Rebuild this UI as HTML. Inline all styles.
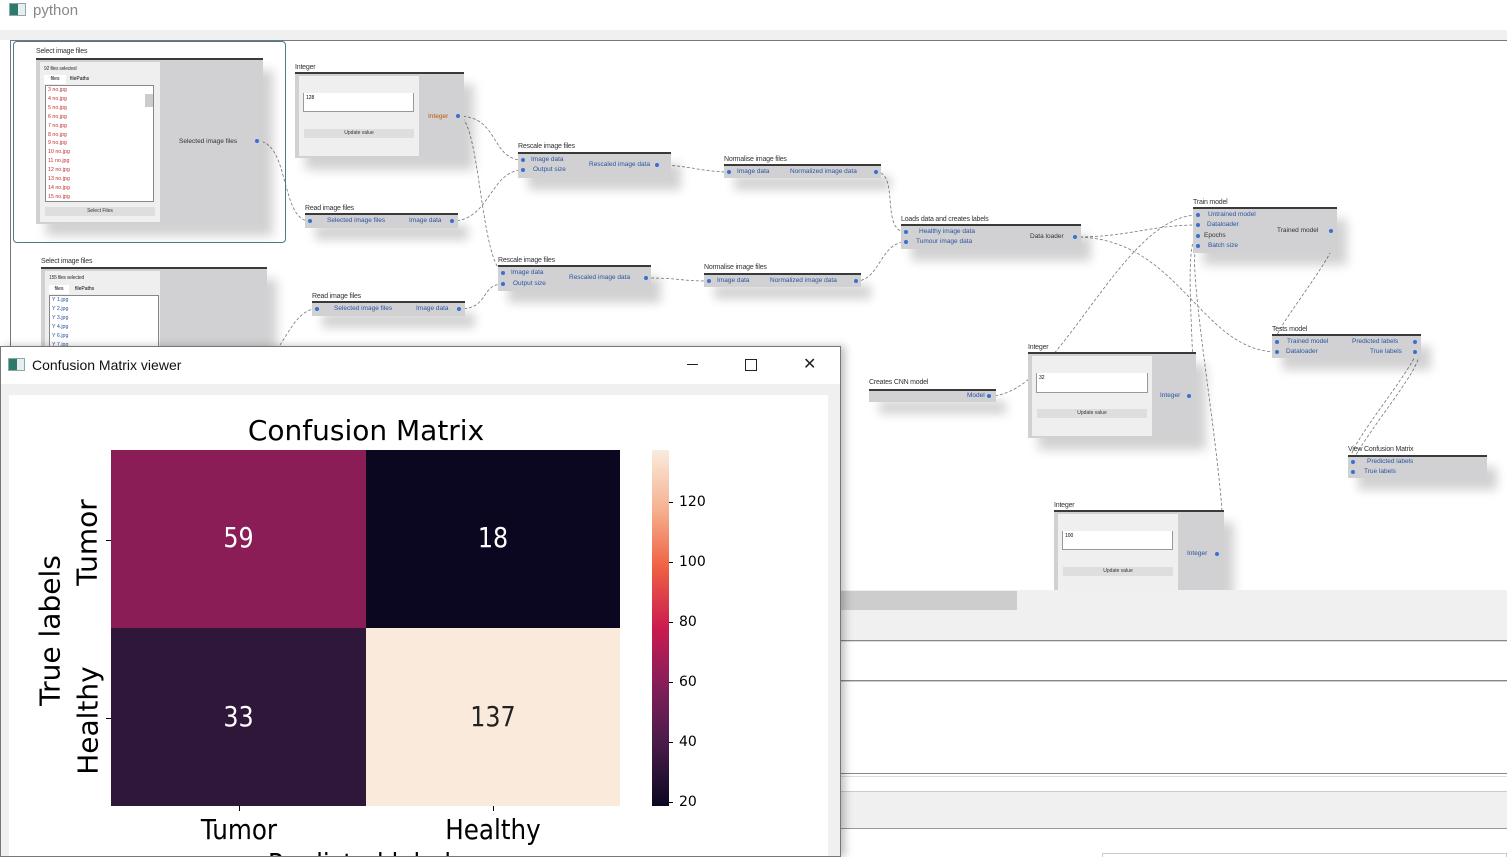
<!DOCTYPE html>
<html style="width:1507px;height:857px;overflow:hidden"><head><meta charset="utf-8"><style>
*{margin:0;padding:0;box-sizing:border-box}
body{width:1507px;height:857px;overflow:hidden;background:#fff;font-family:"Liberation Sans",sans-serif;position:relative}
.a{position:absolute}
.t{position:absolute;font-size:7px;color:#333;white-space:nowrap;letter-spacing:-0.2px}
.n{position:absolute;background:#d1d1d3;border-top:2px solid #3a3a3a;box-shadow:10px 12px 10px rgba(0,0,0,0.18)}
.r{position:absolute;font-size:6.5px;color:#2a55a0;white-space:nowrap}
.d{position:absolute;width:4px;height:4px;border-radius:2px;background:#3b6fd1}
.p{position:absolute;background:#efefef}
.in{position:absolute;background:#fff;border:1px solid #999;border-top:none;font-size:5px;padding:2px}
.b{position:absolute;background:#dedede;font-size:5px;text-align:center;line-height:9px;color:#333}
</style></head><body>
<div class="a" style="left:0;top:0;width:1507px;height:30px;background:#fff"></div>
<div class="a" style="left:9px;top:3px;width:17px;height:13px;border:1px solid #8aa;background:linear-gradient(90deg,#2d7a6a 0 55%,#e8eef0 55%)"></div>
<div class="a" style="left:33px;top:2px;font-size:15px;color:#888">python</div>
<div class="a" style="left:0;top:30px;width:1507px;height:10px;background:#f0f0f0"></div>
<div class="a" style="left:10px;top:40px;width:1497px;height:550px;border-top:1px solid #777;border-left:1px solid #777;background:#fff"></div>

<svg class="a" style="left:0;top:0" width="1507" height="590" fill="none" stroke="#777" stroke-width="0.8" stroke-dasharray="3,2">
<path d="M257 141 C290 141,280 221,310 221"/>
<path d="M458 116 C500 116,490 160,523 160"/>
<path d="M458 116 C480 116,480 260,503 273"/>
<path d="M452 221 C490 221,490 170,523 170"/>
<path d="M459 309 C490 309,480 284,503 284"/>
<path d="M280 345 C290 330,300 309,316 309"/>
<path d="M657 165 C690 165,700 172,730 172"/>
<path d="M646 278 C680 278,680 281,709 281"/>
<path d="M876 172 C900 172,880 232,906 232"/>
<path d="M856 281 C880 281,880 242,906 242"/>
<path d="M1075 237 C1130 237,1150 225,1198 225"/>
<path d="M1075 237 C1180 237,1200 352,1278 352"/>
<path d="M990 396 C1060 396,1120 215,1198 215"/>
<path d="M1190 396 C1200 396,1180 236,1198 236"/>
<path d="M1218 554 C1240 554,1180 246,1198 246"/>
<path d="M1331 231 C1360 231,1260 342,1278 342"/>
<path d="M1415 342 C1440 342,1330 462,1354 462"/>
<path d="M1415 352 C1440 352,1330 472,1354 472"/>
</svg>

<div class="a" style="left:13px;top:41px;width:273px;height:202px;border:1.5px solid #4a7a90;border-radius:4px"></div>
<div class="t" style="left:36px;top:48px">Select image files</div>
<div class="n" style="left:36px;top:58px;width:227px;height:166px"></div>
<div class="p" style="left:40px;top:62px;width:120px;height:160px"></div>
<div class="t" style="left:44px;top:66px;font-size:5px">92 files selected</div>
<div class="a" style="left:44px;top:75px;width:22px;height:9px;background:#fff;font-size:5px;text-align:center;line-height:9px">files</div>
<div class="a" style="left:70px;top:76px;font-size:5px">filePaths</div>
<div class="a" style="left:45px;top:85px;width:109px;height:117px;background:#fff;border:1px solid #888;font-size:5.3px;color:#c03030;line-height:8.9px;padding-left:2px">3 no.jpg<br>4 no.jpg<br>5 no.jpg<br>6 no.jpg<br>7 no.jpg<br>8 no.jpg<br>9 no.jpg<br>10 no.jpg<br>11 no.jpg<br>12 no.jpg<br>13 no.jpg<br>14 no.jpg<br>15 no.jpg</div>
<div class="a" style="left:145px;top:94px;width:8px;height:13px;background:#ccc"></div>
<div class="b" style="left:45px;top:207px;width:110px;height:9px">Select Files</div>
<div class="r" style="left:179px;top:138px;color:#333">Selected image files</div>
<div class="d" style="left:255px;top:139px"></div>

<div class="t" style="left:295px;top:64px">Integer</div>
<div class="n" style="left:295px;top:72px;width:169px;height:86px"></div>
<div class="p" style="left:299px;top:76px;width:120px;height:80px"></div>
<div class="in" style="left:303px;top:93px;width:111px;height:19px">128</div>
<div class="b" style="left:304px;top:129px;width:110px;height:9px">Update value</div>
<div class="r" style="left:428px;top:113px;color:#b85a00">Integer</div>
<div class="d" style="left:456px;top:114px"></div>

<div class="t" style="left:305px;top:205px">Read image files</div>
<div class="n" style="left:305px;top:213px;width:153px;height:15px"></div>
<div class="d" style="left:308px;top:219px"></div><div class="r" style="left:327px;top:217px">Selected image files</div>
<div class="r" style="left:409px;top:217px">Image data</div><div class="d" style="left:450px;top:219px"></div>

<div class="t" style="left:518px;top:143px">Rescale image files</div>
<div class="n" style="left:518px;top:152px;width:153px;height:26px"></div>
<div class="d" style="left:521px;top:158px"></div><div class="r" style="left:531px;top:156px">Image data</div>
<div class="d" style="left:521px;top:168px"></div><div class="r" style="left:533px;top:166px">Output size</div>
<div class="r" style="left:589px;top:161px">Rescaled image data</div><div class="d" style="left:655px;top:163px"></div>

<div class="t" style="left:724px;top:156px">Normalise image files</div>
<div class="n" style="left:724px;top:164px;width:157px;height:14px"></div>
<div class="d" style="left:727px;top:170px"></div><div class="r" style="left:737px;top:168px">Image data</div>
<div class="r" style="left:790px;top:168px">Normalized image data</div><div class="d" style="left:874px;top:170px"></div>

<div class="t" style="left:41px;top:258px">Select image files</div>
<div class="n" style="left:41px;top:267px;width:226px;height:90px"></div>
<div class="p" style="left:45px;top:271px;width:115px;height:86px"></div>
<div class="t" style="left:49px;top:275px;font-size:5px">155 files selected</div>
<div class="a" style="left:49px;top:285px;width:20px;height:9px;background:#fff;font-size:5px;text-align:center;line-height:9px">files</div>
<div class="a" style="left:75px;top:286px;font-size:5px">filePaths</div>
<div class="a" style="left:49px;top:295px;width:110px;height:60px;background:#fff;border:1px solid #888;font-size:5.3px;color:#2a55a0;line-height:8.9px;padding-left:2px">Y 1.jpg<br>Y 2.jpg<br>Y 3.jpg<br>Y 4.jpg<br>Y 6.jpg<br>Y 7.jpg</div>

<div class="t" style="left:312px;top:293px">Read image files</div>
<div class="n" style="left:312px;top:301px;width:153px;height:15px"></div>
<div class="d" style="left:315px;top:307px"></div><div class="r" style="left:334px;top:305px">Selected image files</div>
<div class="r" style="left:416px;top:305px">Image data</div><div class="d" style="left:457px;top:307px"></div>

<div class="t" style="left:498px;top:257px">Rescale image files</div>
<div class="n" style="left:498px;top:265px;width:153px;height:26px"></div>
<div class="d" style="left:501px;top:271px"></div><div class="r" style="left:511px;top:269px">Image data</div>
<div class="d" style="left:501px;top:282px"></div><div class="r" style="left:513px;top:280px">Output size</div>
<div class="r" style="left:569px;top:274px">Rescaled image data</div><div class="d" style="left:644px;top:276px"></div>

<div class="t" style="left:704px;top:264px">Normalise image files</div>
<div class="n" style="left:704px;top:273px;width:157px;height:14px"></div>
<div class="d" style="left:707px;top:279px"></div><div class="r" style="left:717px;top:277px">Image data</div>
<div class="r" style="left:770px;top:277px">Normalized image data</div><div class="d" style="left:854px;top:279px"></div>

<div class="t" style="left:901px;top:216px">Loads data and creates labels</div>
<div class="n" style="left:901px;top:224px;width:180px;height:25px"></div>
<div class="d" style="left:904px;top:230px"></div><div class="r" style="left:919px;top:228px">Healthy image data</div>
<div class="d" style="left:904px;top:240px"></div><div class="r" style="left:916px;top:238px">Tumour image data</div>
<div class="r" style="left:1030px;top:233px;color:#333">Data loader</div><div class="d" style="left:1073px;top:235px"></div>

<div class="t" style="left:1193px;top:199px">Train model</div>
<div class="n" style="left:1193px;top:207px;width:144px;height:46px"></div>
<div class="d" style="left:1196px;top:213px"></div><div class="r" style="left:1208px;top:211px">Untrained model</div>
<div class="d" style="left:1196px;top:223px"></div><div class="r" style="left:1207px;top:221px">Dataloader</div>
<div class="d" style="left:1196px;top:234px"></div><div class="r" style="left:1204px;top:232px;color:#333">Epochs</div>
<div class="d" style="left:1196px;top:244px"></div><div class="r" style="left:1208px;top:242px">Batch size</div>
<div class="r" style="left:1277px;top:227px;color:#333">Trained model</div><div class="d" style="left:1329px;top:229px"></div>

<div class="t" style="left:1272px;top:326px">Tests model</div>
<div class="n" style="left:1272px;top:334px;width:149px;height:24px"></div>
<div class="d" style="left:1275px;top:340px"></div><div class="r" style="left:1287px;top:338px">Trained model</div>
<div class="d" style="left:1275px;top:350px"></div><div class="r" style="left:1286px;top:348px">Dataloader</div>
<div class="r" style="left:1352px;top:338px">Predicted labels</div><div class="d" style="left:1413px;top:340px"></div>
<div class="r" style="left:1370px;top:348px">True labels</div><div class="d" style="left:1413px;top:350px"></div>

<div class="t" style="left:1348px;top:446px">View Confusion Matrix</div>
<div class="n" style="left:1348px;top:455px;width:139px;height:23px"></div>
<div class="d" style="left:1351px;top:460px"></div><div class="r" style="left:1367px;top:458px">Predicted labels</div>
<div class="d" style="left:1351px;top:470px"></div><div class="r" style="left:1364px;top:468px">True labels</div>

<div class="t" style="left:869px;top:379px">Creates CNN model</div>
<div class="n" style="left:869px;top:389px;width:127px;height:13px"></div>
<div class="r" style="left:967px;top:392px">Model</div><div class="d" style="left:987px;top:394px"></div>

<div class="t" style="left:1028px;top:344px">Integer</div>
<div class="n" style="left:1028px;top:352px;width:168px;height:86px"></div>
<div class="p" style="left:1032px;top:356px;width:120px;height:80px"></div>
<div class="in" style="left:1036px;top:373px;width:112px;height:20px">32</div>
<div class="b" style="left:1037px;top:409px;width:110px;height:9px">Update value</div>
<div class="r" style="left:1160px;top:392px">Integer</div><div class="d" style="left:1187px;top:394px"></div>

<div class="t" style="left:1054px;top:502px">Integer</div>
<div class="n" style="left:1054px;top:510px;width:170px;height:80px"></div>
<div class="p" style="left:1058px;top:514px;width:120px;height:76px"></div>
<div class="in" style="left:1062px;top:531px;width:111px;height:19px">100</div>
<div class="b" style="left:1063px;top:567px;width:110px;height:9px">Update value</div>
<div class="r" style="left:1187px;top:550px">Integer</div><div class="d" style="left:1215px;top:552px"></div>

<div class="a" style="left:840px;top:590px;width:667px;height:267px;background:#fff"></div>
<div class="a" style="left:840px;top:590px;width:667px;height:51px;background:#f0f0f0;border-bottom:1px solid #888"></div>
<div class="a" style="left:840px;top:591px;width:177px;height:19px;background:#cdcdcd"></div>
<div class="a" style="left:840px;top:641px;width:667px;height:41px;border-bottom:1px solid #ccc;border-top:1px solid #ddd"></div>
<div class="a" style="left:840px;top:680px;width:667px;height:1px;background:#888"></div>
<div class="a" style="left:840px;top:773px;width:667px;height:1px;background:#888"></div>
<div class="a" style="left:840px;top:776px;width:667px;height:1px;background:#ddd"></div>
<div class="a" style="left:840px;top:791px;width:667px;height:38px;background:#f0f0f0;border-top:1px solid #ccc;border-bottom:1px solid #999"></div>
<div class="a" style="left:1102px;top:853px;width:405px;height:4px;border:1px solid #ccc;border-bottom:none"></div>

<div class="a" style="left:0;top:346px;width:841px;height:511px;background:#f0f0f0;border:1px solid #777;box-shadow:4px 0 8px rgba(0,0,0,0.25);overflow:hidden">
<div class="a" style="left:0;top:0;width:839px;height:37px;background:#fff"></div>
<div class="a" style="left:7px;top:11px;width:17px;height:13px;border:1px solid #8aa;background:linear-gradient(90deg,#2d7a6a 0 55%,#e8eef0 55%)"></div>
<div class="a" style="left:31px;top:10px;font-size:14px;color:#111">Confusion Matrix viewer</div>
<div class="a" style="left:686px;top:17px;width:11px;height:1px;background:#222"></div>
<div class="a" style="left:744px;top:12px;width:12px;height:12px;border:1px solid #222"></div>
<div class="a" style="left:802px;top:11px;font-size:16px;color:#222;line-height:14px">✕</div>
<div class="a" style="left:8px;top:48px;width:819px;height:470px;background:#fff"></div>

<div class="a" style="left:165px;top:67px;width:400px;text-align:center;font-family:'DejaVu Sans',sans-serif;font-size:28px;color:#000">Confusion Matrix</div>
<div class="a" style="left:110px;top:103px;width:255px;height:178px;background:#8a1c56"></div>
<div class="a" style="left:365px;top:103px;width:254px;height:178px;background:#0b0720"></div>
<div class="a" style="left:110px;top:281px;width:255px;height:178px;background:#2e1739"></div>
<div class="a" style="left:365px;top:281px;width:254px;height:178px;background:#faeadc"></div>
<div class="a" style="left:110px;top:174px;width:255px;text-align:center;font-family:'DejaVu Sans',sans-serif;font-size:28px;color:#fff;transform:scaleX(0.85)">59</div>
<div class="a" style="left:365px;top:174px;width:254px;text-align:center;font-family:'DejaVu Sans',sans-serif;font-size:28px;color:#fff;transform:scaleX(0.85)">18</div>
<div class="a" style="left:110px;top:353px;width:255px;text-align:center;font-family:'DejaVu Sans',sans-serif;font-size:28px;color:#fff;transform:scaleX(0.85)">33</div>
<div class="a" style="left:365px;top:353px;width:254px;text-align:center;font-family:'DejaVu Sans',sans-serif;font-size:28px;color:#222;transform:scaleX(0.85)">137</div>
<div class="a" style="left:105px;top:193px;width:5px;height:1px;background:#000"></div>
<div class="a" style="left:105px;top:371px;width:5px;height:1px;background:#000"></div>
<div class="a" style="left:238px;top:459px;width:1px;height:5px;background:#000"></div>
<div class="a" style="left:492px;top:459px;width:1px;height:5px;background:#000"></div>
<div class="a" style="left:36px;top:179px;width:100px;text-align:center;font-family:'DejaVu Sans',sans-serif;font-size:28px;transform:rotate(-90deg);color:#000">Tumor</div>
<div class="a" style="left:27px;top:357px;width:120px;text-align:center;font-family:'DejaVu Sans',sans-serif;font-size:28px;transform:rotate(-90deg);color:#000">Healthy</div>
<div class="a" style="left:-31px;top:267px;width:160px;text-align:center;font-family:'DejaVu Sans',sans-serif;font-size:28px;transform:rotate(-90deg);color:#000">True labels</div>
<div class="a" style="left:178px;top:466px;width:120px;text-align:center;font-family:'DejaVu Sans',sans-serif;font-size:28px;transform:scaleX(0.88)">Tumor</div>
<div class="a" style="left:422px;top:466px;width:140px;text-align:center;font-family:'DejaVu Sans',sans-serif;font-size:28px;transform:scaleX(0.88)">Healthy</div>
<div class="a" style="left:215px;top:500px;width:300px;text-align:center;font-family:'DejaVu Sans',sans-serif;font-size:28px;transform:scaleX(0.88)">Predicted labels</div>

<div class="a" style="left:651px;top:103px;width:17px;height:356px;background:linear-gradient(#faebdd 0%,#f5b08f 17%,#f06043 33%,#cb1b4f 50%,#841e5a 66%,#4a1c4b 82%,#0c0820 100%)"></div>
<div class="a" style="left:668px;top:103px;font-family:'DejaVu Sans',sans-serif;font-size:14px;color:#000;line-height:1">
<div class="a" style="top:52px;left:0;width:4px;height:1px;background:#000"></div><div class="a" style="top:45px;left:10px">120</div>
<div class="a" style="top:112px;left:0;width:4px;height:1px;background:#000"></div><div class="a" style="top:105px;left:10px">100</div>
<div class="a" style="top:172px;left:0;width:4px;height:1px;background:#000"></div><div class="a" style="top:165px;left:10px">80</div>
<div class="a" style="top:232px;left:0;width:4px;height:1px;background:#000"></div><div class="a" style="top:225px;left:10px">60</div>
<div class="a" style="top:292px;left:0;width:4px;height:1px;background:#000"></div><div class="a" style="top:285px;left:10px">40</div>
<div class="a" style="top:352px;left:0;width:4px;height:1px;background:#000"></div><div class="a" style="top:345px;left:10px">20</div>
</div>
</div>
</body></html>
